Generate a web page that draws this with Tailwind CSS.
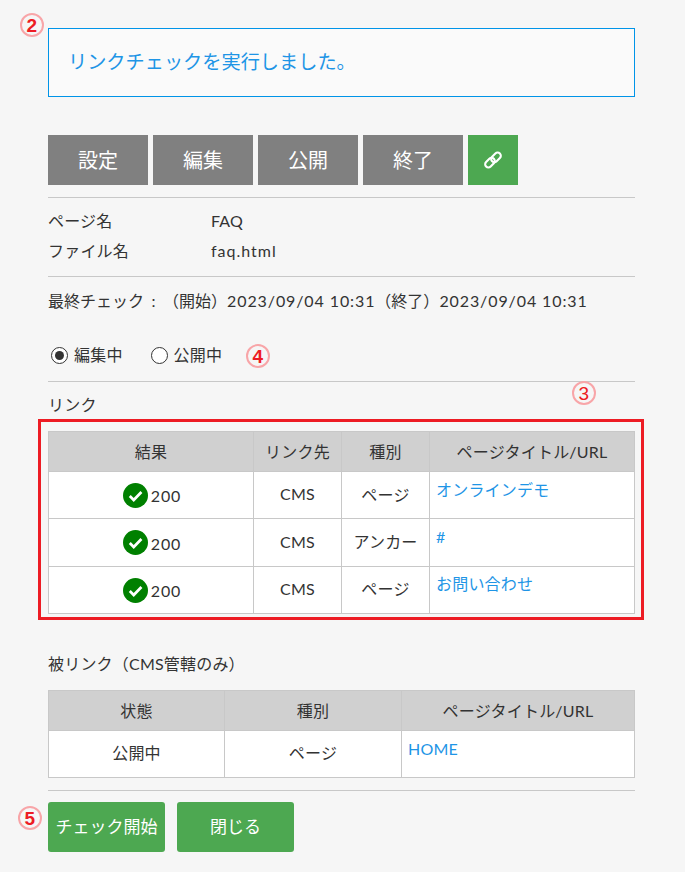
<!doctype html>
<html>
<head>
    <meta charset="UTF-8">
    <script src="https://cdn.jsdelivr.net/npm/@tailwindcss/browser@4"></script>
</head>
<body class="bg-[#f6f6f6] text-[#333] text-[16px] tracking-[0.2px] font-['Lato','Noto_Sans_CJK_JP',sans-serif]">
<div class="relative w-[685px] h-[872px] overflow-hidden pl-[48px] pt-[28px]">

    <!-- annotations -->
    <span class="absolute left-[20px] top-[13px] w-[24px] h-[24px] rounded-full border-2 border-[#f8a5a8] flex items-center justify-center text-[#ed1c24] font-['Liberation_Sans'] font-bold text-[19px] leading-none">2</span>
    <span class="absolute left-[246px] top-[344px] w-[24px] h-[24px] rounded-full border-2 border-[#f8a5a8] flex items-center justify-center text-[#ed1c24] font-['Liberation_Sans'] font-bold text-[19px] leading-none">4</span>
    <span class="absolute left-[572px] top-[381px] w-[24px] h-[24px] rounded-full border-2 border-[#f8a5a8] flex items-center justify-center text-[#ed1c24] font-['Liberation_Sans'] text-[19px] leading-none">3</span>
    <span class="absolute left-[18px] top-[806px] w-[24px] h-[24px] rounded-full border-2 border-[#f8a5a8] flex items-center justify-center text-[#ed1c24] font-['Liberation_Sans'] font-bold text-[19px] leading-none">5</span>
    <div class="absolute left-[38px] top-[419px] w-[606px] h-[201px] border-[3px] border-[#ed1c24]"></div>

    <div class="w-[587px]">
        <div class="h-[69px] border border-[#0094e8] bg-[#fafafa] flex items-center pl-[19px] text-[19.2px] tracking-normal text-[#1e95e6]">リンクチェックを実行しました。</div>

        <div class="flex gap-[5px] mt-[38px] text-white text-[20px] tracking-normal">
            <button class="w-[100px] h-[50px] bg-[#808080]">設定</button>
            <button class="w-[100px] h-[50px] bg-[#808080]">編集</button>
            <button class="w-[100px] h-[50px] bg-[#808080]">公開</button>
            <button class="w-[100px] h-[50px] bg-[#808080]">終了</button>
            <button class="w-[50px] h-[50px] bg-[#4da851] flex items-center justify-center">
                <svg class="w-[18px] h-[18px]" viewBox="0 0 18 18" fill="none" stroke="white" stroke-width="2.1">
                    <rect x="0.5" y="8.4" width="11" height="6.4" rx="3.2" transform="rotate(-45 6 11.6)"/>
                    <rect x="6.5" y="3.2" width="11" height="6.4" rx="3.2" transform="rotate(-45 12 6.4)"/>
                </svg>
            </button>
        </div>

        <hr class="mt-[12px] border-[#c8c8c8]">
        <div class="grid grid-cols-[163px_1fr] leading-[30px] mt-[8px]">
            <div>ページ名</div><div>FAQ</div>
            <div>ファイル名</div><div class="tracking-[1px]">faq.html</div>
        </div>
        <hr class="mt-[10px] border-[#c8c8c8]">
        <div class="mt-[12px] leading-[24px] flex tracking-normal">
            <span>最終チェック</span><span class="w-[19px] text-center">:</span><span>（開始）</span><span class="tracking-[0.9px]">2023/09/04 10:31</span><span>（終了）</span><span class="tracking-[0.9px]">2023/09/04 10:31</span>
        </div>

        <div class="flex items-center mt-[30px] h-[24px] pl-[3px]">
            <span class="w-[17px] h-[17px] rounded-full border border-[#333] bg-white flex items-center justify-center"><span class="w-[9px] h-[9px] rounded-full bg-[#333]"></span></span>
            <span class="ml-[6px]">編集中</span>
            <span class="ml-[28px] w-[17px] h-[17px] rounded-full border border-[#333] bg-white"></span>
            <span class="ml-[6px]">公開中</span>
        </div>
        <hr class="mt-[14px] border-[#c8c8c8]">
        <div class="mt-[11px] leading-[24px]">リンク</div>

        <table class="mt-[14px] w-full table-fixed border-collapse bg-white">
            <thead>
                <tr class="h-[40px] bg-[#d0d0d0]">
                    <th class="w-[205px] font-normal border border-[#c8c8c8]">結果</th>
                    <th class="w-[88px] font-normal border border-[#c8c8c8]">リンク先</th>
                    <th class="w-[88px] font-normal border border-[#c8c8c8]">種別</th>
                    <th class="font-normal border border-[#c8c8c8]">ページタイトル/URL</th>
                </tr>
            </thead>
            <tbody>
                <tr class="h-[47px]">
                    <td class="border border-[#c8c8c8] pl-[2px]"><div class="flex items-center justify-center gap-[3px]"><svg class="w-[25px] h-[25px]" viewBox="0 0 24 24"><circle cx="12" cy="12" r="12" fill="#008000"/><path d="M6.5 12.5l3.8 3.8 7.4-7.6" fill="none" stroke="white" stroke-width="2.6"/></svg><span class="pt-[2px] tracking-[0.9px]">200</span></div></td>
                    <td class="border border-[#c8c8c8] text-center pb-[2px]">CMS</td>
                    <td class="border border-[#c8c8c8] text-center">ページ</td>
                    <td class="border border-[#c8c8c8] align-top px-[6px] pt-[6px] text-[#1e95e6]">オンラインデモ</td>
                </tr>
                <tr class="h-[48px]">
                    <td class="border border-[#c8c8c8] pl-[2px]"><div class="flex items-center justify-center gap-[3px]"><svg class="w-[25px] h-[25px]" viewBox="0 0 24 24"><circle cx="12" cy="12" r="12" fill="#008000"/><path d="M6.5 12.5l3.8 3.8 7.4-7.6" fill="none" stroke="white" stroke-width="2.6"/></svg><span class="pt-[2px] tracking-[0.9px]">200</span></div></td>
                    <td class="border border-[#c8c8c8] text-center pb-[2px]">CMS</td>
                    <td class="border border-[#c8c8c8] text-center pb-[2px]">アンカー</td>
                    <td class="border border-[#c8c8c8] align-top px-[6px] pt-[6px] text-[#1e95e6]">#</td>
                </tr>
                <tr class="h-[47px]">
                    <td class="border border-[#c8c8c8] pl-[2px]"><div class="flex items-center justify-center gap-[3px]"><svg class="w-[25px] h-[25px]" viewBox="0 0 24 24"><circle cx="12" cy="12" r="12" fill="#008000"/><path d="M6.5 12.5l3.8 3.8 7.4-7.6" fill="none" stroke="white" stroke-width="2.6"/></svg><span class="pt-[2px] tracking-[0.9px]">200</span></div></td>
                    <td class="border border-[#c8c8c8] text-center pb-[2px]">CMS</td>
                    <td class="border border-[#c8c8c8] text-center pb-[2px]">ページ</td>
                    <td class="border border-[#c8c8c8] align-top px-[6px] pt-[5px] text-[#1e95e6]">お問い合わせ</td>
                </tr>
            </tbody>
        </table>

        <div class="mt-[38px] leading-[24px]">被リンク（CMS管轄のみ）</div>
        <table class="mt-[14px] w-full table-fixed border-collapse bg-white">
            <thead>
                <tr class="h-[40px] bg-[#d0d0d0]">
                    <th class="w-[176px] font-normal border border-[#c8c8c8]">状態</th>
                    <th class="w-[177px] font-normal border border-[#c8c8c8]">種別</th>
                    <th class="font-normal border border-[#c8c8c8]">ページタイトル/URL</th>
                </tr>
            </thead>
            <tbody>
                <tr class="h-[47px]">
                    <td class="border border-[#c8c8c8] text-center pb-[2px]">公開中</td>
                    <td class="border border-[#c8c8c8] text-center pb-[2px]">ページ</td>
                    <td class="border border-[#c8c8c8] align-top px-[6px] pt-[6px] text-[#1e95e6]">HOME</td>
                </tr>
            </tbody>
        </table>

        <hr class="mt-[12px] border-[#c8c8c8]">
        <div class="flex gap-[12px] mt-[11px] text-white text-[17px] tracking-normal">
            <button class="w-[117px] h-[50px] rounded-[3px] bg-[#4da851]">チェック開始</button>
            <button class="w-[117px] h-[50px] rounded-[3px] bg-[#4da851]">閉じる</button>
        </div>
    </div>
</div>
</body>
</html>
